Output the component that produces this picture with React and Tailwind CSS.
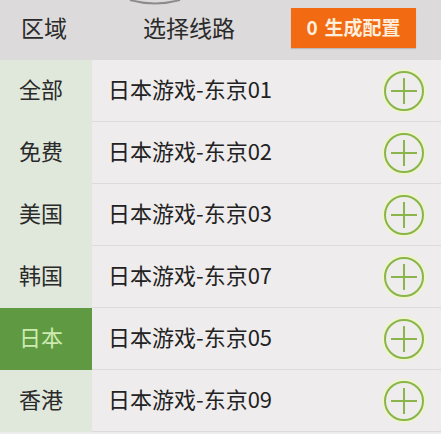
import React from "react";

const regions = ["全部", "免费", "美国", "韩国", "日本", "香港"];
const routes = ["01", "02", "03", "07", "05", "09"];

function PlusIcon() {
  return (
    <svg width="44" height="44" viewBox="0 0 44 44">
      <circle cx="22" cy="22" r="20" fill="none" stroke="#eef5c8" strokeWidth="4" />
      <circle cx="22" cy="22" r="19" fill="none" stroke="#8ab54c" strokeWidth="2" />
      <line x1="22" y1="9" x2="22" y2="35" stroke="#8ab54c" strokeWidth="2" />
      <line x1="9" y1="22" x2="35" y2="22" stroke="#8ab54c" strokeWidth="2" />
    </svg>
  );
}

export default function App() {
  return (
    <div
      className="w-[441px] h-[434px] overflow-hidden bg-[#efeced] relative"
      style={{ fontFamily: '"Noto Sans CJK SC", "Noto Sans", sans-serif' }}
    >
      <svg className="absolute left-[120px] top-0" width="70" height="6" viewBox="0 0 70 6">
        <path d="M10 0 Q35 7 60 0" fill="none" stroke="#8d8c8c" strokeWidth="2" />
      </svg>
      <div className="h-[60px] bg-[#dcdadb] flex items-center text-[#2a2a2a] text-[23px]">
        <div className="w-[92px] pl-[21px] pb-[6px]">区域</div>
        <div className="flex-1 pl-[51px] pb-[6px]">选择线路</div>
        <div className="mr-[25px] mb-[4px] h-[40px] w-[125px] bg-[#f26a12] flex items-center justify-center text-[#fdeedd] text-[19px] font-semibold gap-[7px] shadow-[0_1px_1px_rgba(0,0,0,0.15)]">
          <span className="pb-[2px]">0</span>
          <span className="pb-[2px]">生成配置</span>
        </div>
      </div>
      <div className="flex">
        <div className="w-[92px] bg-[#e0e8dc] flex flex-col">
          {regions.map((r) => (
            <div
              key={r}
              className={
                r === "日本"
                  ? "h-[62px] flex items-center pl-[19px] pb-[5px] text-[22px] bg-[#5f9a43] text-[#cdebb0]"
                  : "h-[62px] flex items-center pl-[19px] pb-[5px] text-[22px] text-[#2a2a2a]"
              }
            >
              {r}
            </div>
          ))}
        </div>
        <div className="flex-1 flex flex-col">
          {routes.map((n) => (
            <div
              key={n}
              className="h-[62px] flex items-center justify-between pl-[16px] pr-[15px] border-b border-[#dedbdc] text-[22px] text-[#222]"
            >
              <span className="pb-[5px]">日本游戏-东京{n}</span>
              <PlusIcon />
            </div>
          ))}
        </div>
      </div>
    </div>
  );
}
